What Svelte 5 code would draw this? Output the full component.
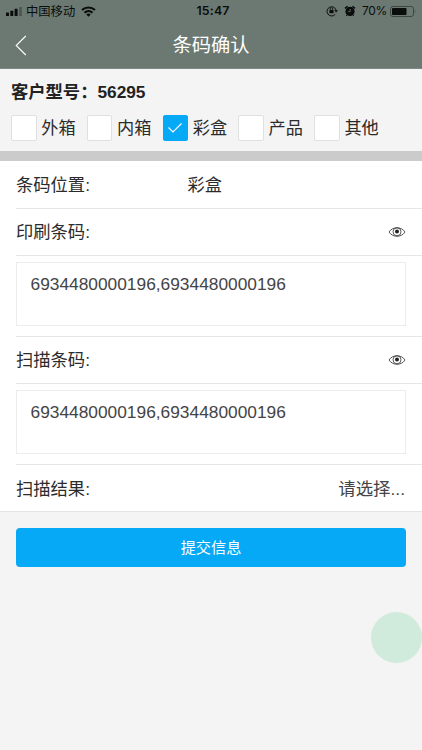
<script lang="ts">
	type BoxOption = {
		label: string;
		checked: boolean;
	};

	let model = $state('56295');
	let options = $state<BoxOption[]>([
		{ label: '外箱', checked: false },
		{ label: '内箱', checked: false },
		{ label: '彩盒', checked: true },
		{ label: '产品', checked: false },
		{ label: '其他', checked: false }
	]);
	let position = $derived(options.find((option) => option.checked)?.label ?? '');
	let printedCodes = $state('6934480000196,6934480000196');
	let scannedCodes = $state('6934480000196,6934480000196');

	function selectOption(index: number) {
		options.forEach((option, i) => {
			option.checked = i === index;
		});
	}
</script>

{#snippet eye()}
	<svg class="eye" viewBox="0 0 18 12" aria-hidden="true">
		<path d="M1 6C4.6 .3 13.4 .3 17 6C13.4 11.7 4.6 11.7 1 6Z" />
		<circle cx="9" cy="5.8" r="4" />
		<circle class="pupil" cx="9" cy="5.4" r="2" />
	</svg>
{/snippet}

<div class="page">
	<header>
		<div class="status">
			<div class="side">
				<svg class="signal" width="17" height="9" viewBox="0 0 17 9">
					<rect x="0" y="5.5" width="3" height="3.5" rx=".6" />
					<rect x="4.3" y="3.7" width="3" height="5.3" rx=".6" />
					<rect x="8.6" y="1.8" width="3" height="7.2" rx=".6" />
					<rect class="weak" x="13" y="0" width="3" height="9" rx=".6" />
				</svg>
				<span class="carrier">中国移动</span>
				<svg width="15" height="11" viewBox="0 0 15 11">
					<g fill="none" stroke="#0b0d0c" stroke-width="2.1">
						<path d="M1 4.1C4.6.6 10.4.6 14 4.1" />
						<path d="M3.5 6.7C5.8 4.5 9.2 4.5 11.5 6.7" />
					</g>
					<path d="M5.3 8.5Q7.5 6.6 9.7 8.5L7.5 10.7Z" />
				</svg>
			</div>
			<span class="time">15:47</span>
			<div class="side right">
				<svg class="lock" width="12" height="12" viewBox="0 0 12 12">
					<path d="M9.2 9.3A4.6 4.6 0 1 1 10.1 5.2" fill="none" stroke="#0b0d0c" stroke-width="1" />
					<path d="M8.2 5.2H12L10.1 7.6Z" />
					<rect x="3.5" y="5" width="4" height="3.2" />
					<path d="M4.2 5V4a1.3 1.3 0 0 1 2.6 0V5" fill="none" stroke="#0b0d0c" stroke-width=".8" />
				</svg>
				<svg class="alarm" width="12" height="12" viewBox="0 0 12 12">
					<circle cx="6" cy="6.4" r="4.6" />
					<path d="M1 3.4L3.6 1.4M11 3.4L8.4 1.4" stroke="#0b0d0c" stroke-width="1.6" />
					<path d="M3 10L2.3 11M9 10L9.7 11" stroke="#0b0d0c" stroke-width="1" />
					<path d="M6.2 4V6.6H4.2" fill="none" stroke="#6b7972" stroke-width=".8" />
				</svg>
				<span class="percent">70%</span>
				<svg width="27" height="11" viewBox="0 0 27 11">
					<rect x=".5" y=".5" width="23" height="10" rx="2.4" fill="none" stroke="#39413d" stroke-width=".9" />
					<rect x="2" y="2" width="14.5" height="7" rx=".8" />
					<path d="M24.8 3.7Q26.3 5.5 24.8 7.3Z" fill="#454e49" />
				</svg>
			</div>
		</div>
		<div class="nav">
			<button class="back" aria-label="返回">
				<svg width="12" height="21" viewBox="0 0 12 21">
					<path d="M10.8 1L1.2 10.5L10.8 20" fill="none" stroke="#fff" stroke-width="1.1" />
				</svg>
			</button>
			<h1>条码确认</h1>
		</div>
	</header>

	<section class="model">
		<h2>客户型号：{model}</h2>
		<div class="options">
			{#each options as option, index (option.label)}
				<button class="option" onclick={() => selectOption(index)}>
					<span class="box" class:checked={option.checked}>
						{#if option.checked}
							<svg width="16" height="12" viewBox="0 0 16 12">
								<path d="M1.5 5.5L6 10L14.5 1.5" fill="none" stroke="#fff" stroke-width="1.2" />
							</svg>
						{/if}
					</span>
					{option.label}
				</button>
			{/each}
		</div>
	</section>

	<section class="form">
		<div class="row">
			<span class="label">条码位置:</span>
			<span class="value">{position}</span>
		</div>
		<div class="row">
			<span class="label">印刷条码:</span>
			{@render eye()}
		</div>
		<div class="codes">
			<div class="field">{printedCodes}</div>
		</div>
		<div class="row">
			<span class="label">扫描条码:</span>
			{@render eye()}
		</div>
		<div class="codes">
			<div class="field">{scannedCodes}</div>
		</div>
		<div class="row last">
			<span class="label">扫描结果:</span>
			<span class="choose">请选择...</span>
		</div>
	</section>

	<button class="submit">提交信息</button>
	<div class="float"></div>
</div>

<style>
	:global(body) {
		background: #f4f4f4;
	}

	.page {
		position: relative;
		box-sizing: border-box;
		height: 750px;
		overflow: hidden;
		background: #f4f4f4;
		color: #2b2b2b;
		font-family: 'Liberation Sans', 'Noto Sans CJK SC', sans-serif;
		font-size: 17.2px;
	}

	button {
		padding: 0;
		border: 0;
		background: none;
		color: inherit;
		font: inherit;
	}

	svg {
		display: block;
		flex: none;
	}

	header {
		box-sizing: border-box;
		height: 69px;
		background: #6b7972;
		border-bottom: 1px solid #818986;
	}

	.status {
		display: grid;
		grid-template-columns: 1fr auto 1fr;
		align-items: center;
		height: 22px;
		padding: 0 5px 0 6px;
		color: #0b0d0c;
		font-size: 12.3px;
		line-height: 22px;
	}

	.status svg {
		fill: #0b0d0c;
	}

	.side {
		display: flex;
		align-items: center;
	}

	.signal {
		margin-right: 3px;
	}

	.status .weak {
		fill: #4e5954;
	}

	.carrier {
		height: 21px;
		margin-right: 6px;
	}

	.time {
		padding-left: 3px;
		font-family: Inter, sans-serif;
		font-size: 12.3px;
		font-weight: 600;
		letter-spacing: 0.2px;
	}

	.right {
		justify-content: flex-end;
	}

	.alarm {
		margin: 0 6px;
	}

	.percent {
		margin-right: 3px;
		font-family: Inter, sans-serif;
		font-size: 12px;
		letter-spacing: -0.3px;
	}

	.nav {
		display: grid;
		grid-template-columns: 40px 1fr 40px;
		align-items: center;
		height: 46px;
		color: #fff;
	}

	.back {
		padding-left: 15px;
	}

	h1 {
		margin: 0;
		padding-top: 2px;
		font-size: 19.3px;
		font-weight: 400;
		line-height: 44px;
		text-align: center;
	}

	.model {
		height: 82px;
		padding: 0 11px;
	}

	h2 {
		margin: 0;
		padding-top: 10px;
		color: #222;
		font-size: 17.3px;
		line-height: 26px;
	}

	.options {
		display: flex;
		padding-top: 10px;
	}

	.option {
		display: flex;
		align-items: center;
		width: 75.8px;
		height: 26px;
		line-height: 26px;
	}

	.box {
		display: flex;
		align-items: center;
		justify-content: center;
		box-sizing: border-box;
		width: 25.6px;
		height: 26px;
		margin-right: 4.6px;
		border: 1px solid #e0e0e0;
		border-radius: 2px;
		background: #fff;
	}

	.box.checked {
		border-color: #05a9f6;
		background: #05a9f6;
	}

	.form {
		border-top: 10px solid #cbcbcb;
		border-bottom: 1px solid #e4e4e4;
		padding-left: 16px;
		background: #fff;
	}

	.row {
		display: flex;
		align-items: center;
		box-sizing: border-box;
		height: 47px;
		padding-right: 16px;
		border-bottom: 1px solid #e6e6e6;
	}

	.row:first-child {
		height: 48px;
	}

	.row.last {
		height: 46px;
		padding-top: 2px;
		border-bottom: 0;
	}

	.label,
	.value,
	.choose {
		line-height: 26px;
	}

	.label {
		width: 171.5px;
		font-size: 17.3px;
	}

	.eye {
		width: 18px;
		height: 12px;
		margin-left: auto;
		fill: none;
		stroke: #444;
		stroke-width: 0.9;
	}

	.eye .pupil {
		fill: #222;
		stroke: none;
	}

	.codes {
		box-sizing: border-box;
		height: 81px;
		padding: 6px 16px 10px 0;
		border-bottom: 1px solid #e6e6e6;
	}

	.field {
		box-sizing: border-box;
		height: 64px;
		padding: 10px 13.5px;
		border: 1px solid #ededed;
		color: #444;
		font-size: 17.33px;
		line-height: 22px;
	}

	.choose {
		margin-left: auto;
		padding-right: 1px;
		color: #444;
		font-size: 17.4px;
	}

	.submit {
		display: block;
		width: 390px;
		height: 39px;
		margin: 16px auto 0;
		border-radius: 4px;
		background: #05a9f6;
		color: #fff;
		font-size: 15.2px;
		line-height: 39px;
	}

	/* floating assistive button */
	.float {
		position: absolute;
		right: 0;
		bottom: 87px;
		width: 51px;
		height: 51px;
		border-radius: 50%;
		background: #d0eadc;
	}
</style>
